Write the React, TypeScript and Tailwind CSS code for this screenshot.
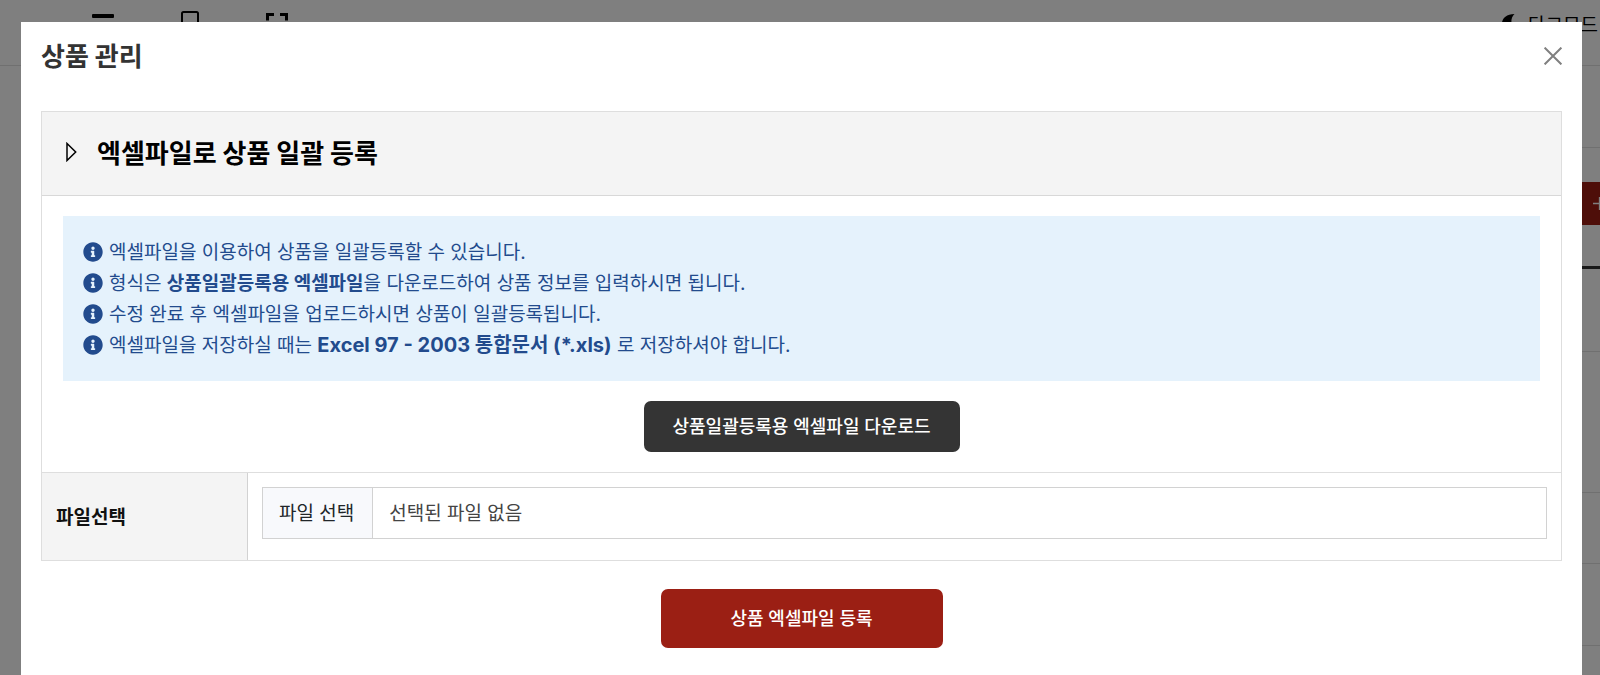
import { useState } from "react";
import { FaInfoCircle } from "react-icons/fa";

const notes = [
  <>엑셀파일을 이용하여 상품을 일괄등록할 수 있습니다.</>,
  <>
    형식은 <strong className="font-bold">상품일괄등록용 엑셀파일</strong>을 다운로드하여 상품 정보를 입력하시면 됩니다.
  </>,
  <>수정 완료 후 엑셀파일을 업로드하시면 상품이 일괄등록됩니다.</>,
  <>
    엑셀파일을 저장하실 때는 <strong className="text-[20px] font-bold">Excel 97 - 2003 통합문서 (*.xls)</strong> 로 저장하셔야 합니다.
  </>,
];

function PageHeader() {
  return (
    <header className="flex h-[66px] items-start justify-between border-b border-[#e0e0e0] pr-[2px] pl-[92px]">
      <div className="flex items-start gap-[67px] pt-[11px]">
        <button type="button" aria-label="메뉴" className="block">
          <svg width="22" height="26" viewBox="0 0 22 26" fill="currentColor">
            <rect x="0" y="3" width="22" height="4" rx="1" />
            <rect x="0" y="12" width="22" height="4" rx="1" />
            <rect x="0" y="21" width="22" height="4" rx="1" />
          </svg>
        </button>
        <button type="button" aria-label="모바일 보기" className="block">
          <svg width="18" height="26" viewBox="0 0 18 26" fill="none" stroke="currentColor" strokeWidth="2">
            <rect x="1" y="1" width="16" height="24" rx="1.500" />
          </svg>
        </button>
        <button type="button" aria-label="전체 화면" className="block">
          <svg width="22" height="26" viewBox="0 0 22 26" fill="none" stroke="currentColor" strokeWidth="3">
            <path d="M1.500 9.500V3.500H8M14 3.500H20.500V9.500M20.500 17V23H14M8 23H1.500V17" />
          </svg>
        </button>
      </div>
      <a href="#dark" className="flex items-start gap-[10px] pt-[14px]">
        <svg width="16" height="20" viewBox="0 0 16 20" fill="currentColor">
          <path d="M12.500 0C8 4 8 13 15 16C8 20 0 16 0 9.500C0 4 5 0 12.500 0Z" />
        </svg>
        <span className="text-[19px] leading-[24px]">다크모드</span>
      </a>
    </header>
  );
}

function PageContent() {
  return (
    <main className="ml-[60px]">
      <div className="h-[82px] border-b border-[#e0e0e0]" />
      <div className="flex justify-end pt-[34px]">
        <button
          type="button"
          aria-label="추가"
          className="flex h-[43px] w-[60px] items-center overflow-hidden bg-[#9c1d13] pl-[53px] text-white"
        >
          <svg width="13" height="13" viewBox="0 0 13 13" fill="none" stroke="currentColor" strokeWidth="1.300" className="shrink-0">
            <path d="M0 6.500H13M6.500 0V13" />
          </svg>
        </button>
      </div>
      <div className="mt-[41px] border-t-[3px] border-[#333]">
        <div className="h-[83px] border-b border-[#e0e0e0]" />
        <div className="h-[141px] border-b border-[#e0e0e0]" />
        <div className="h-[71px] border-b border-[#e0e0e0]" />
        <div className="h-[82px] border-b border-[#e0e0e0]" />
      </div>
    </main>
  );
}

function FilePicker() {
  const [name, setName] = useState("");
  return (
    <label
      htmlFor="excel"
      className="flex h-[52px] w-full cursor-pointer items-stretch border border-[#d2d2d2] bg-white text-[19px] leading-[50px] font-normal focus-within:outline-2"
    >
      <input
        id="excel"
        type="file"
        accept=".xls"
        className="sr-only"
        onChange={(e) => setName(e.target.files?.[0]?.name ?? "")}
      />
      <span className="border-r border-[#d2d2d2] bg-[#f8f9fc] pt-[2px] pr-[18px] pl-4 leading-[48px] text-[#212529]">
        파일 선택
      </span>
      <span className="px-4 pt-[2px] leading-[48px] text-[#444]">{name || "선택된 파일 없음"}</span>
    </label>
  );
}

function ProductDialog() {
  return (
    <section
      role="dialog"
      aria-labelledby="dialog-title"
      className="fixed top-[22px] right-[18px] bottom-0 left-[21px] overflow-hidden bg-white px-5"
    >
      <div className="flex h-[89px] items-start justify-between">
        <h1
          id="dialog-title"
          className="pt-[15px] font-['Noto_Sans_CJK_KR',sans-serif] text-[26px] leading-[36px] font-bold text-[#333]"
        >
          상품 관리
        </h1>
        <button type="button" aria-label="닫기" className="mt-[25px] text-[#808080]">
          <svg width="18" height="18" viewBox="0 0 18 18" fill="none" stroke="currentColor" strokeWidth="2">
            <path d="M0.600 0.600L17.400 17.400M17.400 0.600L0.600 17.400" />
          </svg>
        </button>
      </div>

      <form onSubmit={(e) => e.preventDefault()}>
        <div className="border border-[#dedede]">
          <div className="flex h-[84px] items-center gap-5 border-b border-[#d8d8d8] bg-[#f4f4f4] pb-[3px] pl-6">
            <svg width="11" height="20" viewBox="0 0 11 20" fill="none" stroke="#000" strokeWidth="1.500">
              <path d="M1 1.500V18.500L9.700 10Z" />
            </svg>
            <h2 className="font-['Noto_Sans_CJK_KR',sans-serif] text-[26px] leading-[36px] font-bold text-black">
              엑셀파일로 상품 일괄 등록
            </h2>
          </div>

          <div className="flex flex-col items-center gap-5 px-[21px] py-5">
            <ul className="w-full bg-[#e5f2fc] px-5 pt-[21px] pb-5 text-[19px] leading-[31px] text-[#224b8d]">
              {notes.map((note, i) => (
                <li key={i} className="flex h-[31px] items-center gap-[6px]">
                  <FaInfoCircle size={20} className="mb-[2px] shrink-0" />
                  <p>{note}</p>
                </li>
              ))}
            </ul>
            <button
              type="button"
              className="h-[51px] rounded-[7px] bg-[#343434] px-[29px] text-[18px] font-medium text-white"
            >
              상품일괄등록용 엑셀파일 다운로드
            </button>
          </div>

          <div className="flex border-t border-[#dedede]">
            <label
              htmlFor="excel"
              className="flex w-[206px] shrink-0 items-center border-r border-[#d2d2d2] bg-[#f4f4f4] pl-[14px] font-['Noto_Sans_CJK_KR',sans-serif] text-[19px] font-bold text-[#111]"
            >
              파일선택
            </label>
            <div className="flex-1 px-[14px] pt-[14px] pb-[21px]">
              <FilePicker />
            </div>
          </div>
        </div>

        <div className="flex justify-center pt-7">
          <button
            type="submit"
            className="h-[59px] w-[282px] rounded-[7px] bg-[#9b1f14] text-[18px] font-medium text-white"
          >
            상품 엑셀파일 등록
          </button>
        </div>
      </form>
    </section>
  );
}

export default function App() {
  return (
    <div className="min-h-screen bg-white font-['Inter','Noto_Sans_CJK_KR',sans-serif] text-black">
      <PageHeader />
      <PageContent />
      <div className="fixed inset-0 bg-black/50" />
      <ProductDialog />
    </div>
  );
}
